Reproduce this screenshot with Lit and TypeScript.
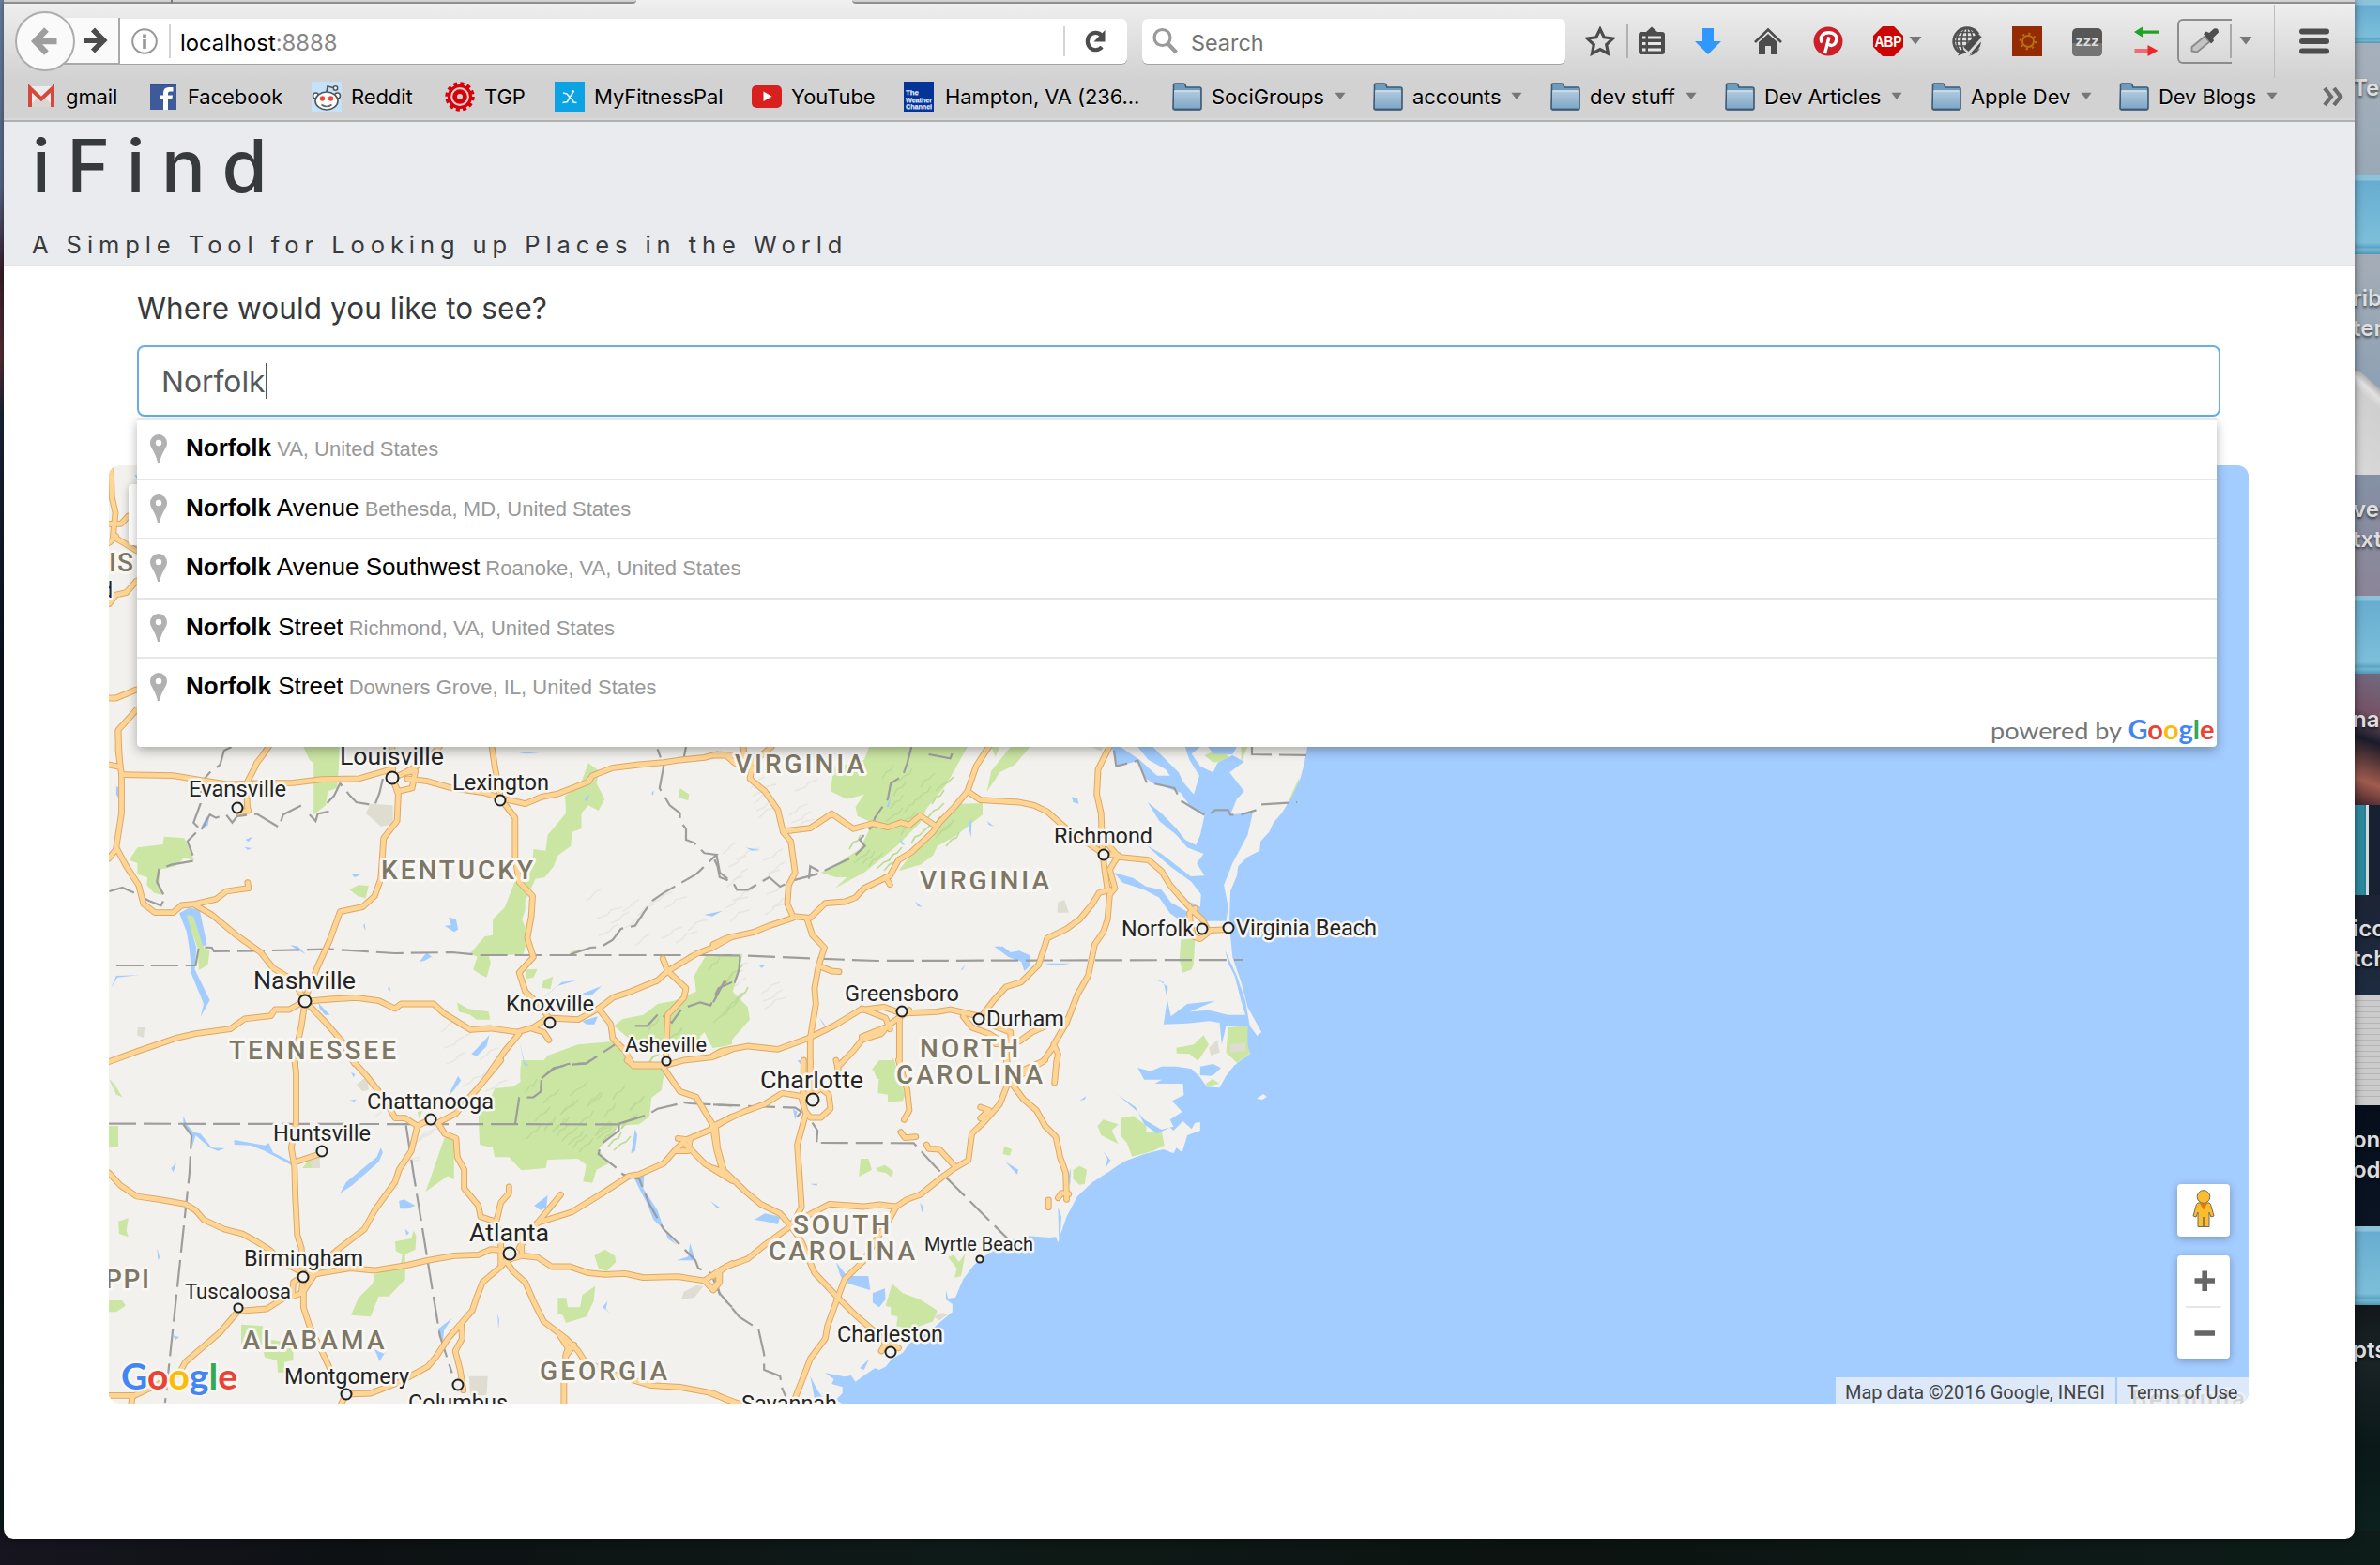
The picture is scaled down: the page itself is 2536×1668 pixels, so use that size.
import { LitElement, html, svg, css } from "lit";
import { customElement } from "lit/decorators.js";

const words = (s: string) => s.trim().split(/\s*;\s*/).filter(Boolean);

/* Every tile has its own survey grid; the matrix places it on the map. */
interface Tile { m: string; parks: string; water: string; grey: string; border: string; road: string; }

const tiles: Tile[] = [
  {
    m: "translate(0 290) scale(.54209 .33333)",
    parks: "", water: "264,648 270,650 270,662; 2600,600 4430,600 4430,1600 2600,1600", grey: "", border: "",
    road: `218,620 220,720 227,770 225,800 222,845 268,890; 215,865 228,845; 215,805 238,805 252,780; 215,1060 228,1032 248,1025 268,988;
      215,1362 228,1362 268,1335; 268,1400 232,1465 235,1560`,
  },
  {
    m: "translate(100 780) scale(.43367 .33333)",
    parks: `515,48 605,48 598,180 575,190 570,235 540,265 540,100 530,90;
      107,370 170,360 172,335 222,340 247,412 222,403 200,430 162,440 160,490 170,522 148,515 130,490 132,465 107,455 107,420 87,410;
      222,578 245,575 268,655 270,690 285,700 280,745 258,762 255,690;
      628,505 650,490 675,492 668,532 648,525;
      1215,100 1242,125 1235,165 1255,215 1240,252 1215,235 1198,260 1198,310 1175,320 1172,365 1140,395 1130,430 1108,465 1085,470 1060,540 1060,570 1052,600 1068,650 1055,712 970,715 975,740 965,785 948,775 932,760 942,720 925,708 960,655 980,650 980,600 1010,560 1040,460 1078,420 1080,375 1110,380 1115,330 1160,260 1158,205 1195,170;
      892,865 920,885 970,895 974,920 940,920 925,905 897,895;
      1440,180 1463,200 1460,220 1437,210; 1060,760 1090,758 1080,785 1062,790; 1105,795 1128,782 1122,822 1100,818;
      1505,712 1568,712 1568,1000 1520,1010 1500,960 1478,990 1440,985 1400,1000 1350,985 1318,985 1278,940 1300,918 1350,905 1385,870 1425,860 1480,830 1475,780;
      1048,1070 1098,1062 1115,1035 1190,1000 1275,990 1310,1010 1320,1065 1400,1075 1400,1110 1048,1110; 1190,695 1225,695 1180,708 1168,705`,
    water: `55,175 68,180 62,215 55,200; 210,580 235,562 260,570 278,680 268,685 245,590 228,585 252,690 248,760 285,858 262,912 270,870 240,775 235,695 228,640;
      372,345 390,335 380,352; 370,368 388,372 378,378; 632,452 655,458 640,465; 665,612 668,638 662,620;
      862,620 878,618 872,592 890,600 895,632 885,640; 800,735 818,705 832,722 852,735 828,720 812,732;
      482,682 500,685 520,710 498,695; 552,868 580,905 568,905 555,885; 928,1030 972,970 965,1005 940,1038; 1045,985 1058,1055 1070,1068 1058,1066;
      1200,925 1238,910 1230,935 1210,935; 1100,855 1150,800 1185,795 1140,812 1110,845; 1195,840 1248,812 1225,840; 42,820 55,780 110,778 58,785;
      1025,62 1062,70 1095,68; 1205,215 1218,200 1212,225; 1500,585 1545,572 1520,590; 275,275 285,265 280,300 262,310; 725,810 730,830 722,822; 1198,395 1208,400; 1370,195 1376,188 1374,205; 145,545 155,550 160,558; 38,330 48,335`,
    grey: "668,260 680,230 735,235 735,295 705,302; 108,945 125,945 122,978 106,970",
    border: `338,48 320,60 310,105 285,130 265,160 262,230 245,290 260,310 230,350 248,412 190,425 160,440 155,480 175,530 165,555 135,540 100,515 70,498 38,510;
      265,312 285,265 300,275 325,265 340,290 352,270 400,262 455,305 465,265 510,235 525,240; 530,265 545,285 550,262 575,255 575,225 590,205 605,165 630,205 645,225 690,235 702,195 710,150;
      55,747 250,747 258,688 290,690 295,702 400,700 580,695 740,708 880,705 950,714 1568,714; 1170,712 1220,690 1245,688 1275,665 1295,630 1330,620 1350,580 1372,540 1400,515 1480,455 1530,393 1500,388 1475,355 1455,345 1455,310 1440,285 1440,260 1415,235 1390,180 1400,110 1385,55; 1455,48 1450,80;
      1530,395 1538,450 1568,480; 1100,1108 1130,1075 1165,1065 1210,1060 1280,1000; 1330,940 1360,940 1390,898 1420,930 1445,885 1490,865 1515,875 1535,820 1568,800`,
    road: `60,0 60,60 68,135 68,260 55,370 80,430 110,490 122,550 150,578 195,578 215,555 250,550 300,535 325,510 380,500 378,482; 37,105 64,112;
      68,137 195,140 250,152 330,168 400,165 490,163 560,152 650,150 690,135 735,118; 430,46 415,75 400,100 395,115 375,165 377,240 380,252 355,258;
      37,405 55,375; 520,850 550,750 580,665 605,575 660,560 690,525 705,470 712,340 745,285 748,200 733,145; 733,48 735,140;
      850,46 820,90 765,130 733,150 748,190 782,180 790,125 765,130; 770,150 820,158 880,180 960,195 1010,215 1060,230 1100,208 1140,198 1215,160 1225,140 1275,115 1340,105 1400,98 1440,90 1500,82 1530,72 1568,75;
      978,48 985,110 1000,215 1035,275 1035,400 1045,480 1078,525 1075,590 1065,660 1080,720 1045,770 1060,830 1100,880 1115,910;
      250,555 290,585 350,650 410,705 440,755 490,795 519,860; 519,860 480,888 445,888 435,908 370,918 335,950 250,965 200,980 110,1020 37,1055;
      519,862 580,855 645,850 700,860 740,885 755,870 835,870 860,900 925,952 975,948 1040,960 1080,945 1115,915 1190,920 1240,885 1275,850 1320,830 1385,795 1410,765 1480,710 1520,690 1568,655;
      519,862 510,940 495,1030 495,1060; 525,870 570,930 610,990 640,1060; 1045,965 1010,1020 975,1085; 1080,950 1105,960 1118,985;
      1240,885 1270,935 1275,980 1305,1020 1325,1068 1400,1068 1450,1050 1520,1040 1568,1015; 1398,725 1410,765 1455,820 1450,850 1410,905 1405,1065`,
  },
  {
    m: "translate(100 1130) scale(.43367 .33333)",
    parks: `37,210 60,210 60,278 37,275; 60,515 85,505 80,545 85,565 62,555; 37,768 70,768 78,785 55,805 37,805; 37,60 50,75 70,118 55,110;
      865,235 885,250 885,382 870,370 815,420 825,385 845,310; 740,580 780,570 785,545 792,560 790,605 765,620 765,700 725,755 700,755 680,820 632,815 650,760 685,715 690,685 725,665 752,665 758,620 742,610;
      362,845 415,850 420,890 490,905 490,960 468,965 468,998 452,998 450,960 420,950 415,920 362,910;
      1230,625 1255,605 1280,625 1283,645 1260,675 1240,665; 1140,760 1160,760 1165,790 1195,790 1200,750 1232,722 1228,770 1210,820 1160,840 1152,815 1140,810;
      1030,85 1048,70 1050,0 1200,0 1240,30 1300,25 1380,15 1400,45 1395,95 1370,120 1365,180 1340,205 1290,210 1240,285 1265,330 1235,350 1225,392 1202,388 1210,335 1190,315 1115,318 1110,345 1050,352 1020,310 985,310 980,280 948,270 945,180 965,150 985,90;
      525,325 555,308 545,345 512,345; 795,165 808,155 800,190`,
    water: `220,178 228,205 245,230 262,235 290,280 322,282 305,290 285,280 250,240 242,275 240,232 220,210; 345,255 420,272 430,265 440,295 485,325 498,345 470,325 420,290 385,272 345,270;
      605,425 620,390 695,310 705,280 710,295 700,325 635,400; 870,115 895,50 902,65 885,95; 190,345 203,328 195,358; 750,450 762,445 790,465 770,475 752,475; 1082,465 1115,432 1112,470 1098,480;
      1325,370 1352,370 1350,410 1385,480 1400,540 1375,510 1360,460 1338,405; 1432,640 1460,628 1465,585 1478,640; 845,860 880,825 860,865 858,900; 690,925 715,940 718,930 702,963;
      155,600 162,630 158,640; 1320,298 1330,220 1335,240 1330,290; 1250,790 1262,770 1258,795 1270,810; 1515,450 1542,475 1530,472; 992,810 996,830 994,862; 1310,505 1322,520; 632,38 642,45 638,55; 628,128 645,125 640,132; 1058,0 1068,12; 195,880 210,885 200,895; 1430,335 1465,390; 765,540 775,552 768,560; 765,760 770,770; 1405,550 1432,590 1410,570`,
    grey: "532,318 555,305 556,345 535,345; 645,78 672,50 675,95 660,100; 922,1010 968,1010 965,1070 925,1075; 1450,740 1480,720 1498,722 1475,760 1443,765",
    border: `37,203 1290,205; 767,208 785,360 815,600 850,880 880,1000; 220,205 240,240 235,360 175,1095; 1290,203 1290,225 1245,270 1240,300 1285,345 1300,365 1340,380 1365,460 1400,540 1440,590 1478,640 1485,665 1525,685 1538,750 1568,790;
      1290,203 1360,175 1385,155 1435,140 1440,133 1465,138 1568,145; 1035,205 1045,120 1080,118 1098,100 1100,55 1130,28 1165,12 1210,10 1220,0`,
    road: `493,0 497,40 497,200 485,280 493,340 495,435 500,560 510,600 513,680; 497,325 560,298; 635,0 670,50 715,125 740,185 765,185 795,210 825,190;
      1000,0 940,95 915,130 890,170 845,200 862,235 890,250 893,310 910,350 910,410 945,465 950,500 985,515 1000,560 1000,655; 795,210 780,290 750,350 740,390 690,480 665,540 600,605 560,650 515,690;
      37,360 65,400 105,435 160,445 225,460 250,480 270,510 320,540 365,555 400,580 430,605 470,650 515,680; 513,692 560,680 630,665 690,672 770,655 820,640 885,625 945,622 975,605 1010,608;
      1020,405 1020,425 1000,455 990,510; 1147,430 1090,520 1045,600; 1090,520 1175,485 1250,425 1315,370 1340,365 1400,330 1430,285 1455,255 1510,225 1568,180;
      1310,0 1325,15 1395,15 1440,100 1480,118 1520,205 1530,285 1545,355; 1435,250 1465,255 1460,290 1430,290; 1455,270 1500,330 1568,385;
      1048,560 1052,625 1090,630 1125,660 1170,660 1215,680 1255,685 1305,682 1350,695 1435,692 1500,705 1540,670 1568,650; 1500,705 1520,732 1535,710 1535,680;
      1025,620 1000,660 955,710 940,760 930,800 900,845 870,890 840,950 820,980 750,1030 680,1065 620,1068 608,1098; 1012,640 1030,675 1060,710 1080,770 1105,835 1160,890 1190,930 1205,960 1265,1000 1370,1040 1440,1045 1510,1062 1568,1090; 1052,625 1012,640;
      1145,880 1165,920 1160,940 1155,1030 1155,1098; 1180,910 1160,945; 903,845 905,890 888,930 900,990 908,1055;
      513,690 490,710 488,745 455,770 425,795 355,802 310,870 225,965 210,1000 160,1035 100,1072 37,1072; 95,1075 92,1098; 540,690 515,740 515,790 530,850 560,930 585,1000 620,1068; 488,755 510,745 515,690`,
  },
  {
    m: "translate(760 780) scale(.45918 .33333)",
    parks: `362,48 590,48 540,170 495,245 480,290 430,360 395,400 350,450 282,500 310,465 285,465 250,450 300,410 340,375 370,290 335,270 330,240 350,200 310,215 272,190 280,115 350,90;
      570,230 625,228 625,265 560,335 520,365 510,395 480,425 430,445 460,390 510,335 530,285; 645,48 665,48 655,80; 690,48 735,48 700,105 665,130 635,192 645,125;
      0,712 68,710 55,790 45,830 80,880 85,920 30,1005 0,1010; 1085,665 1118,660 1115,740 1110,760 1090,770 1082,730; 1195,945 1240,940 1245,1030 1215,1058 1190,1025;
      1075,1010 1115,1000 1138,970 1150,1000 1125,1052 1105,1030 1075,1028; 370,1075 405,1070 418,1040 420,1110 380,1110; 1360,145 1355,205 1320,270 1345,190; 1140,75 1165,60 1195,75 1190,95 1160,98; 1225,48 1240,48 1225,95`,
    water: `3700,40 1380,40 1370,110 1362,150 1340,215 1318,262 1300,290 1290,320 1270,350 1268,380 1240,400 1218,430 1215,460 1200,510 1198,600 1200,650 1205,720 1225,800 1240,880 1272,960 1262,972 1240,930 1240,1000 1246,1030 1215,1060 1200,1112 3700,1112;
      925,48 935,110 985,94 1005,150 1020,165 1045,175 1085,195 1110,245 1140,268 1130,330 1120,362 1095,345 1075,310 1040,260 1008,225 1035,285 1075,330 1100,370 1138,390 1122,420 1140,460 1108,462 1040,390 1005,362 1060,430 1110,480 1132,520 1130,560 1100,540 1130,605 1190,605 1195,560 1185,490 1205,420 1240,330 1252,258 1200,265 1215,215 1232,190 1198,130 1232,95 1205,75 1170,100 1160,130 1130,110 1110,70 1130,48 1095,48 1105,90 1128,140 1115,200 1090,160 1080,130 1040,75 1020,48 985,48 1010,90 1050,120 1060,140 1030,140 990,90 945,48;
      1148,48 1160,70 1205,72 1215,48; 930,450 975,468 1005,495 1040,505 1062,545 1100,575 1092,612 1060,580 1035,530 1000,505 950,482; 1188,700 1195,740 1210,780 1225,860 1235,905 1195,905 1150,890 1105,895 1165,860 1100,870 1062,910 1045,800 1020,788 1040,800 1055,815 1052,870 1045,935 1100,932 1150,925 1175,930 1180,1000 1190,940 1245,940 1235,860 1215,780;
      652,686 672,686 690,705 710,700 735,715 735,748 722,765 715,735 685,720; 765,740 830,740 800,748; 832,208 845,212 848,230 835,225; 985,1075 1020,1090 1065,1112 1000,1112; 1130,1080 1160,1068 1175,1080 1155,1100 1130,1098;
      600,275 598,340 592,300; 635,285 652,302 640,298; 468,542 485,560 475,558; 562,548 576,552; 75,370 110,378 90,380; 245,912 262,942 255,935; 895,1010 900,1030; 105,745 122,745 112,755; 402,240 412,208 408,240; 432,340 445,362 438,360; 575,760 585,745 578,762; 330,1020 342,1045; 898,188 905,192; 205,1110 212,1065 220,1110`,
    grey: "800,545 815,537 825,578 798,578; 1150,1010 1170,985 1175,1025 1155,1035; 1200,1000 1235,995 1235,1020 1200,1025; 878,48 905,48 900,62",
    border: `0,714 80,716 240,725 380,732 1230,729; 460,48 450,100 440,140 412,165 405,215 375,275 370,300 340,345 352,365 325,400 240,455 185,475 155,495 130,465 80,505 55,505 45,480 15,465 10,430 0,400; 222,470 225,430 245,445;
      500,72 550,85 560,48; 930,60 935,110 985,92 1005,160 1070,180 1085,220 1145,270 1165,250 1195,250 1200,265 1225,265 1260,250; 1272,232 1355,225; 1250,48 1250,72 1382,75; 62,718 60,760 50,800 25,800 0,865`,
    road: `0,75 30,75 50,100 90,115 85,150 120,190 150,250 162,320 180,350 190,450 175,490 172,550 185,590 225,595 260,548 305,543 330,530 350,500 410,460 430,410 460,385 510,320 525,290 560,240 590,190 610,110 640,46;
      70,46 72,85; 135,48 90,100; 162,318 225,308 275,262 325,310 370,293 405,305 435,290 455,298 480,268 515,300; 400,465 410,488; 590,190 620,218 710,225 745,235 775,255 820,310 895,380;
      920,46 893,120 890,200 900,260 903,380 908,440 915,505; 905,340 940,400 1010,410 1040,445 1060,490 1085,530 1115,575 1135,600 1150,640 1130,662 1115,655 1108,620 1105,580 1118,565; 1150,635 1195,632;
      905,390 940,395 920,440 932,500 920,520 915,600 905,640 885,680 870,780 845,840 820,930 790,1000 800,1030 797,1060; 790,1005 765,1055 710,1100;
      920,505 895,515 880,550 850,600 820,630 775,660 755,745 715,800 680,815 650,860 625,905; 0,680 30,660 95,640 130,620 185,595; 218,600 230,650 258,690 245,745 235,820 238,870 225,980 225,1060; 248,750 275,765 292,767;
      0,1035 20,1020 80,1005 150,1015 220,980 280,940 340,890 395,880 437,900 520,895 550,888 620,910; 345,885 400,915 410,950; 432,905 432,1060; 455,890 405,940 390,965 345,985 325,1020 290,1070 285,1110; 345,975 400,945;
      580,910 600,945 640,965 680,1000 710,990 740,960 790,930 820,920; 640,935 690,960 690,1000 655,998; 680,1000 682,1060`,
  },
  {
    m: "translate(760 1130) scale(.45918 .33333)",
    parks: `368,30 385,0 420,0 445,110 440,130 405,135 405,110 382,105 385,45; 892,210 905,190 940,205 925,225 940,268 900,240; 945,185 975,178 1005,210 1005,230 1040,225 1047,272 1020,290 972,308 960,265 945,240;
      835,350 850,338 867,350 862,395 850,398 835,380; 342,315 360,315 368,350 338,372; 378,345 398,335 418,355 415,375 400,360 380,355; 675,275 693,285 688,305 672,300;
      415,715 440,745 480,765 520,800 510,835 460,860 425,850 428,820 412,815 412,790 400,785; 545,630 558,622 570,645 585,618 575,690 560,695 565,665`,
    water: `3700,0 1235,0 1210,15 1190,50 1175,88 1145,85 1130,55 1110,28 1075,20 1040,20 1015,35 985,25 1000,45 1050,55 1025,75 1090,75 1092,112 1065,130 1088,165 1060,190 1068,212 1040,222 1000,190 985,165 940,112 920,92 980,150 1000,205 1030,235 1060,215 1068,225 1090,195 1110,220 1118,200 1130,198 1130,225 1100,240 1088,295 1075,280 1068,298 1045,285 1000,300 960,320 940,335 920,355 880,390 845,435 820,500 805,560 800,583 795,565 780,567 730,562 690,575 655,590 640,615 605,655 580,700 562,758 545,762 540,735 540,765 555,780 555,805 520,845 500,870 455,905 440,935 415,955 400,980 385,990 375,985 350,1008 330,1028 320,1008 305,1012 260,1000 280,1020 275,1035 300,1045 300,1065 285,1085 300,1100 3700,1100;
      285,645 310,690 360,690 364,735 315,715 295,690; 370,745 398,730 400,765 385,790 370,775; 95,510 120,490 155,500 150,525 120,515; 800,470 808,500 805,560 802,570; 830,345 828,400 822,380; 905,290 922,320 910,345 915,315;
      225,1010 240,1050 262,1098 235,1080; 340,985 362,955 350,990; 850,130 865,115 862,125; 678,325 708,350 705,365; 195,0 215,0 215,35; 185,155 195,165 190,190; 0,450 18,475; 350,430 355,450; 480,455 488,470 484,488; 225,395 242,395 240,402; 135,450 165,475; 300,290 322,342; 686,430 700,445; 1130,20 1160,12 1178,25 1160,48 1130,48`,
    grey: "510,820 530,808 545,812 525,832",
    border: `0,142 190,152 205,165 190,188; 230,200 242,225 240,262; 250,264 465,265 515,340 690,580; 0,700 15,745 45,795 60,820 105,860 118,940 118,990 155,1010 160,1050 168,1075`,
    road: `225,0 225,100 205,120 215,170 195,270 200,370 205,470 185,520; 210,0 208,130; 228,125 205,115 160,105 120,140 70,165 0,210; 215,165 225,183 250,183 272,155 268,110 250,90 228,110;
      5,210 10,280 25,355; 0,345 30,360 75,420 110,460 155,490 180,530 205,580 235,680 290,760 330,815 385,880 400,905 430,920; 390,930 400,905;
      180,530 120,590 80,635 30,660 0,690; 15,680 15,710 0,735; 180,525 270,460 350,468 385,462 425,468 450,445 480,430 530,375 560,345 592,320 600,235 630,195 665,140 685,70 690,50 770,0;
      425,468 400,530 380,570 350,640 305,700 290,755 265,850 260,890 225,955 210,1010 190,1080; 495,270 500,283 525,285 560,338; 435,230 445,248 470,245; 430,0 450,95 455,160 443,190;
      680,0 690,70 720,125 750,160 770,210 795,245 805,310 818,360 820,445; 800,440 808,425 825,428; 778,447 778,470; 797,0 792,72; 620,150 640,160 620,185 632,190; 0,1065 30,1085 60,1098; 285,0 290,30`,
  },
];

type Label = [string, number, number, number, number, string];
/* text, left, baseline, width, size, kind */
const labels: Label[] = [
  ["KENTUCKY", 406, 937, 162, 28, "state"], ["TENNESSEE", 244, 1128.5, 178, 28, "state"], ["ALABAMA", 258.500, 1437.5, 151, 28, "state"],
  ["GEORGIA", 575, 1470.5, 136, 28, "state"], ["PPI", 112, 1373, 47, 28, "state"], ["VIRGINIA", 783, 824, 138, 28, "state"],
  ["VIRGINIA", 980, 948, 138, 28, "state"], ["NORTH", 980, 1127, 105, 28, "state"], ["CAROLINA", 955, 1154.5, 156, 28, "state"],
  ["SOUTH", 845, 1314.5, 103, 28, "state"], ["CAROLINA", 819, 1342.5, 156, 28, "state"], ["IS", 116, 609, 26, 28, "state"], ["d", 108, 637, 12, 24, "city"],
  ["Louisville", 362, 815, 111, 26, "city"], ["Evansville", 201, 849, 104, 23.5, "city"], ["Lexington", 482, 841.5, 103, 23.5, "city"],
  ["Nashville", 270, 1054, 109, 26, "city"], ["Knoxville", 539, 1077.5, 94, 23.5, "city"], ["Asheville", 666, 1121, 87, 21.5, "city"],
  ["Chattanooga", 391, 1181.5, 135, 23.5, "city"], ["Huntsville", 291, 1215.5, 104, 23.5, "city"], ["Atlanta", 500, 1322.5, 85, 26, "city"],
  ["Birmingham", 260, 1349, 127, 23.5, "city"], ["Tuscaloosa", 197, 1384, 113, 22, "city"], ["Montgomery", 303, 1474.5, 133, 23.5, "city"],
  ["Columbus", 435, 1503, 106, 23.5, "city"], ["Richmond", 1123, 899, 105, 23.5, "city"], ["Norfolk", 1195, 998, 77, 23.5, "city"],
  ["Virginia Beach", 1317, 997, 150, 23.5, "city"], ["Greensboro", 900, 1066.5, 122, 23.5, "city"], ["Durham", 1051, 1094, 83, 23.5, "city"],
  ["Charlotte", 810, 1159.5, 110, 26, "city"], ["Myrtle Beach", 985, 1333, 116, 20.5, "city"], ["Charleston", 892, 1429.5, 113, 23.5, "city"],
  ["Savannah", 790, 1503.5, 102, 23.5, "city"], ["Bermuda", 2271, 1500, 121, 26, "faint"],
];
const markers: [number, number, number][] = [
  [418, 829, 6.5], [253, 861, 5.5], [533, 853, 5.5], [325, 1067, 6.5], [586, 1090, 5.5], [710, 1131, 4.6], [459, 1193, 5.5], [343, 1227, 5.5],
  [543, 1336, 6.5], [323, 1361, 5.5], [254, 1394, 4.6], [369, 1486, 5.5], [488, 1476, 5.5], [1176, 911, 5.5], [1281, 990, 5.5], [1309, 989, 5.5],
  [961, 1078, 5.5], [1043, 1086, 5.5], [866, 1172, 6.5], [1044, 1342, 3.6], [949, 1441, 5.5],
];

const googleSpans = svg`<tspan fill="#4285f4">G</tspan><tspan fill="#ea4335">o</tspan><tspan fill="#fbbc05">o</tspan><tspan fill="#4285f4">g</tspan><tspan fill="#34a853">l</tspan><tspan fill="#ea4335">e</tspan>`;

@customElement("place-map")
export class PlaceMap extends LitElement {
  static styles = css`
    :host { display: block; position: relative; width: 2280px; height: 1000px; border-radius: 12px; overflow: hidden; background: #f2f1ed; }
    .canvas { display: block; width: 2280px; height: 1000px; font-family: Roboto, sans-serif; }
    .canvas path { vector-effect: non-scaling-stroke; }
    .park { fill: #cbe6a3; }
    .water { fill: #a3ccff; }
    .grey { fill: #dfddd2; }
    .border { fill: none; stroke: #9d9d9d; stroke-width: 2.200; stroke-dasharray: 29 8; }
    .case { fill: none; stroke: #dda865; stroke-width: 6.8; stroke-linejoin: round; stroke-linecap: round; }
    .road { fill: none; stroke: #ffd596; stroke-width: 4.8; stroke-linejoin: round; stroke-linecap: round; }
    .ridge { fill: none; stroke: #bcdb96; stroke-width: 1.6; }
    .scarp { fill: none; stroke: #e7e6e2; stroke-width: 1.6; }
    .city { fill: #242424; stroke: #f7f6f3; stroke-width: 5; paint-order: stroke; stroke-linejoin: round; }
    .state { fill: #7e7766; font-weight: 500; stroke: #f8f7f4; stroke-width: 6; paint-order: stroke; stroke-linejoin: round; }
    .faint { fill: #84878c; font-weight: 500; stroke: #d6e6fb; stroke-width: 5; paint-order: stroke; }
    .dot { fill: #f0f0ee; stroke: #222; stroke-width: 2; }
    .logo { font-family: Lato, sans-serif; stroke: #f8f7f4; stroke-width: 5; paint-order: stroke; stroke-linejoin: round; font-weight: 700; }
    .kinds { position: absolute; left: 21px; top: 20px; width: 150px; height: 65px; background: #fff; border-radius: 4px; box-shadow: 0 2px 8px rgba(0,0,0,.25); }
    .controls { position: absolute; right: 20px; top: 766px; display: flex; flex-direction: column; gap: 20px; }
    .ctl { width: 56px; background: #fff; border-radius: 4px; box-shadow: 0 2px 8px rgba(0,0,0,.28); display: flex; flex-direction: column; align-items: center; }
    .peg { height: 56px; justify-content: center; }
    .zoom { height: 110px; }
    .zoom svg { display: block; }
    .peg svg { margin-top: -4px; }
    .credit { position: absolute; right: 0; bottom: 0; height: 28px; display: flex; gap: 2px; font: 20px/31px Roboto, sans-serif; color: #444; white-space: nowrap; }
    .credit span { box-sizing: border-box; height: 28px; line-height: 32px; background: rgba(245,245,245,.7); padding-left: 10px; }
    .data { width: 298px; }
    .terms { width: 140px; }
  `;
  private layer(key: "parks" | "water" | "grey" | "border" | "road", cls: string, close: boolean) {
    return tiles.map((t) => svg`<g transform=${t.m}>${words(t[key]).map((p) => svg`<path class=${cls} d=${"M" + p.replace(/\s+/g, "L") + (close ? "Z" : "")}></path>`)}</g>`);
  }
  private ridges() {
    const areas: [number, number, number, number, number][] = [
      [560, 1165, 120, 50, 20], [580, 1205, 80, 25, 10], [690, 1100, 55, 35, 8], [755, 1035, 30, 60, 8], [940, 830, 70, 60, 14], [905, 905, 45, 25, 7], [960, 890, 50, 20, 5],
    ];
    return areas.map(([x, y, w, h, n]) => Array.from({ length: n }, (_, i) => {
      const px = x + ((i * 37) % w), py = y + ((i * 23) % h);
      return svg`<path class="ridge" d=${`M${px} ${py}l${4 + (i % 3) * 2} -7l5 -2l${3 + (i % 4)} -6`}></path>`;
    }));
  }
  private scarps() {
    const areas: [number, number, number, number, number][] = [[625, 960, 110, 50, 13], [770, 910, 80, 80, 15], [470, 1100, 60, 70, 8], [800, 840, 80, 50, 9], [770, 1030, 80, 50, 7], [400, 1190, 60, 90, 8]];
    return areas.map(([x, y, w, h, n]) => Array.from({ length: n }, (_, i) => {
      const px = x + ((i * 41) % w), py = y + ((i * 29) % h);
      return svg`<path class="scarp" d=${`M${px} ${py}l${5 + (i % 4) * 2} -4l4 -5l${6 + (i % 3) * 3} -3`}></path>`;
    }));
  }
  render() {
    return html`
      <svg class="canvas" viewBox="116 496 2280 1000">
        ${this.scarps()} ${this.layer("parks", "park", true)} ${this.ridges()} ${this.layer("grey", "grey", true)} ${this.layer("water", "water", true)}
        <path fill="#f2f1ed" d="M1339 1171l7 -5l4 3l-5 3z"></path>
        <path class="park" d="M1285 1155l7 -5l7 5l-13 3z"></path>
        ${this.layer("border", "border", false)} ${this.layer("road", "case", false)} ${this.layer("road", "road", false)}
        ${labels.map(([t, x, y, w, s, k]) => svg`<text class=${k} x=${x} y=${y} font-size=${s} textLength=${w} lengthAdjust=${k === "city" ? "spacingAndGlyphs" : "spacing"}>${t}</text>`)}
        ${markers.map(([x, y, r]) => svg`<circle class="dot" cx=${x} cy=${y} r=${r}></circle>`)}
        <text class="logo" x="129" y="1480.5" font-size="38.5" textLength="124" lengthAdjust="spacingAndGlyphs">${googleSpans}</text>
      </svg>
      <div class="kinds"></div>
      <div class="controls">
        <div class="ctl peg">
          <svg width="24" height="40" viewBox="0 0 24 40"><g fill="#fbbc2d" stroke="#6f6a5a" stroke-width="1"><path d="M6 14h12l1.500 1.500L23 28l-3 1-2-5v15.500H6V24l-2 5-3-1 3.500-12.500z"></path><circle cx="12" cy="7.500" r="6.800"></circle></g><path d="M8 14.500h8l-4 7z" fill="#e6780f"></path><path d="M12 29v10.500" stroke="#6f6a5a" stroke-width="1.500"></path></svg>
        </div>
        <div class="ctl zoom">
          <svg width="56" height="110"><path d="M18.500 27h21.500M29.200 16.500v21.500M18.500 83h21.500" stroke="#666" stroke-width="5.600"></path><path d="M9 55h37.500" stroke="#e6e6e6" stroke-width="2"></path></svg>
        </div>
      </div>
      <div class="credit"><span class="data">Map data ©2016 Google, INEGI</span><span class="terms">Terms of Use</span></div>`;
  }
}

const folder = svg`<path d="M1.500 7V3.500q0-1.500 1.500-1.500h9q1.500 0 2 1.500l.8 2.500H29q2 0 2 2V28q0 2-2 2H3q-2 0-2-2z" fill="#6f9cbd" stroke="#3d5a74" stroke-width="1.600"></path><path d="M2 9.500h28V28H2z" fill="url(#fold)"></path><path d="M2.500 10h27" stroke="#d3e2ee" stroke-width="1.500"></path><path d="M2 29.500h28" stroke="#3d5a74" stroke-width="1.500"></path><defs><linearGradient id="fold" x1="0" y1="0" x2="0" y2="1"><stop offset="0" stop-color="#b3cadd"></stop><stop offset="1" stop-color="#7fa9c8"></stop></linearGradient></defs>`;
const marks: Record<string, unknown> = {
  folder,
  gmail: svg`<rect x="0" y="5" width="28" height="22" fill="#eeecea"></rect><path d="M0 27l11-11 3 3 3-3 11 11z" fill="#d9d6d3"></path><path d="M2 27V7l12 11.500L26 7v20" fill="none" stroke="#d5493d" stroke-width="4"></path>`,
  facebook: svg`<rect x="0" y="2" width="28" height="28" fill="#3f5a9a"></rect><path d="M0 2h28v1.500H0z" fill="#2c4380"></path><path d="M14 30V19h-4v-4.500h4V12q0-6 6-6h4.500v4.500H21q-2 0-2 2v2h5l-.8 4.500H19v11z" fill="#fff"></path>`,
  reddit: svg`<rect width="32" height="32" fill="#c5e2fb"></rect><g stroke="#555" stroke-width="1.600" fill="#fff"><path d="M16 11l1-6 6 1.500" fill="none"></path><circle cx="25.500" cy="7" r="2.200"></circle><circle cx="4.500" cy="15" r="3"></circle><circle cx="27.500" cy="15" r="3"></circle><ellipse cx="16" cy="20.500" rx="12" ry="9.500"></ellipse></g><circle cx="11.500" cy="18" r="2.700" fill="#f8433a"></circle><circle cx="20.500" cy="18" r="2.700" fill="#f8433a"></circle><path d="M10.500 24.500q5.500 4 11 0" fill="none" stroke="#666" stroke-width="1.600"></path>`,
  tgp: svg`<circle cx="16" cy="16" r="13.500" fill="none" stroke="#d90007" stroke-width="4.500" stroke-dasharray="3.900 3.170"></circle><circle cx="16" cy="16" r="11.500" fill="none" stroke="#d90007" stroke-width="3.200"></circle><circle cx="16" cy="16" r="5.400" fill="none" stroke="#d90007" stroke-width="4.800"></circle>`,
  mfp: svg`<rect width="32" height="32" fill="#0ba3e4"></rect><path d="M9 12l4 1 3 3.500 3.500-4.500M16.500 16l-3 5.500-5 1M16 17.500l3 1.500 1 3 3.500.5" fill="none" stroke="#e4f6ff" stroke-width="1.600"></path><circle cx="19.500" cy="10.500" r="1.400" fill="#fff"></circle>`,
  youtube: svg`<rect x="0" y="4" width="32" height="24" rx="5" fill="#d8201f"></rect><path d="M12.500 10.500v10.500l9-5.200z" fill="#fff"></path>`,
  weather: svg`<rect width="32" height="32" fill="#053498"></rect><g fill="#dfe7f7" font-family="Liberation Sans, sans-serif" font-size="8" font-weight="700"><text x="2" y="14">The</text><text x="2" y="21.500" textLength="28" lengthAdjust="spacingAndGlyphs">Weather</text><text x="2" y="29" textLength="28" lengthAdjust="spacingAndGlyphs">Channel</text></g>`,
};
const bookmarks: [string, string][] = [
  ["gmail", "gmail"], ["facebook", "Facebook"], ["reddit", "Reddit"], ["tgp", "TGP"], ["mfp", "MyFitnessPal"], ["youtube", "YouTube"], ["weather", "Hampton, VA (236..."],
  ["folder", "SociGroups"], ["folder", "accounts"], ["folder", "dev stuff"], ["folder", "Dev Articles"], ["folder", "Apple Dev"], ["folder", "Dev Blogs"],
];
const narrow = new Set(["gmail", "facebook"]);

const ico = (body: unknown, w = 32) => html`<svg class="ico" width=${w} height="32" viewBox="0 0 ${w} 32">${body}</svg>`;
const caret = html`<svg class="ico caret" width="14" height="32" viewBox="0 0 14 32"><path d="M.5 11h13L7 19.500z" fill="#777"></path></svg>`;

@customElement("browser-chrome")
export class BrowserChrome extends LitElement {
  static styles = css`
    :host { display: block; height: 130px; box-sizing: border-box; border-bottom: 2px solid #aeb1b2; font-family: Inter, sans-serif; color: #000;
      background: linear-gradient(#f0f0f0 0, #ebebeb 12px, #d2d2d2 84px, #d2d2d2 125px, #dcdcdc 128px); }
    .tabs { display: flex; height: 4px; }
    .tab { box-sizing: border-box; background: #d1d1d1; border-bottom: 2px solid #8e8e8e; }
    .first { width: 180px; border-right: 2px solid #777; }
    .second { width: 494px; border-bottom-right-radius: 6px; }
    .gap { width: 230px; }
    .rest { flex: 1; border-bottom-left-radius: 6px; }
    .nav { display: flex; align-items: center; height: 80px; }
    .ico { display: block; flex: none; }
    .back { box-sizing: border-box; width: 64px; height: 64px; margin-left: 12px; border: 2px solid #adadad; border-radius: 50%; background: #fafafa; display: flex; align-items: center; justify-content: center; position: relative; z-index: 1; }
    .fwd { box-sizing: border-box; width: 60px; height: 50px; margin-left: -12px; background: #fafafa; border-right: 2px solid #a9a9a9; border-bottom: 2px solid #a9a9a9; display: flex; align-items: center; padding-left: 21px; }
    .field { display: flex; align-items: center; height: 48px; background: #fff; box-shadow: 0 1px 0 #a4a4a4; font-size: 23px; white-space: nowrap; }
    .url { width: 1073px; border-radius: 0 6px 6px 0; }
    .url .ico:first-child { margin-left: 11px; }
    .rule { width: 2px; height: 36px; background: #d4d4d4; margin: 0 10px 0 11px; }
    .port { color: #868686; }
    .host { flex: 1; padding-top: 2px; font-size: 23.800px; }
    .url .rule.end { height: 32px; margin: 0 9px 0 0; }
    .reload { margin-right: 22px; }
    .search { width: 451px; margin-left: 16px; border-radius: 6px; color: #737373; }
    .search .ico { margin: 0 13px 0 11px; }
    .search span { padding-top: 2px; font-size: 23.400px; }
    .tools { display: grid; align-items: center; margin-left: 21px; grid-template-columns: 44px 11px 60px 64px 64px 64px 38px 46px 64px 64px 64px 48px 66px 37px 27px 34px; height: 80px; }
    .line { width: 2px; height: 36px; background: #b1b1b1; }
    .tall { width: 1px; height: 78px; background: #bdbdbd; }
    .pick { box-sizing: border-box; width: 58px; height: 48px; display: flex; align-items: center; border: 2px solid #8d8d8d; border-right: 0; border-radius: 6px 0 0 6px; padding-left: 11px; }
    .pick .line { margin-left: 11px; background: #a8a8a8; }
    .marks { display: grid; align-items: center; height: 38px; padding-left: 26px; font-size: 22px; letter-spacing: -.1px; white-space: nowrap;
      grid-template-columns: 130px 172px 142px 117px 210px 162px 286px 214px 189px 186px 220px 200px 217px 30px; }
    .mark { display: flex; align-items: center; text-shadow: 0 1px 0 rgba(255,255,255,.5); }
    .mark span { margin-left: 10px; }
    .mark.small span { margin-left: 12px; }
    .mark .caret { margin-left: 11px; width: 12px; }
    .mark.wide span { margin-left: 12px; }
  `;
  render() {
    return html`
      <div class="tabs"><div class="tab first"></div><div class="tab second"></div><div class="gap"></div><div class="tab rest"></div></div>
      <div class="nav">
        <div class="back">${ico(svg`<path d="M28.500 16H8M17.500 3.500L5.500 16l12 12.500" fill="none" stroke="#9e9e9e" stroke-width="6.500"></path>`)}</div>
        <div class="fwd">${ico(svg`<path d="M0 16H18M10 4.500L21.500 16 10 27.500" fill="none" stroke="#4c4c4c" stroke-width="5.800"></path>`, 26)}</div>
        <div class="field url">
          ${ico(svg`<circle cx="15" cy="16" r="12.800" fill="none" stroke="#989898" stroke-width="2"></circle><path d="M15 14v10M15 8.500v3.500" stroke="#989898" stroke-width="3.600"></path>`, 30)}
          <div class="rule"></div><div class="host">localhost<span class="port">:8888</span></div>
          <div class="rule end"></div>
          <div class="reload">${ico(svg`<path d="M18.500 9.500A8.600 9.200 0 1 0 19 22" fill="none" stroke="#4c4c4c" stroke-width="4.200"></path><path d="M22.500 4v12.500H10.500z" fill="#4c4c4c"></path>`, 24)}</div>
        </div>
        <div class="field search">${ico(svg`<circle cx="10.500" cy="12" r="8.500" fill="none" stroke="#9a9a9a" stroke-width="3.200"></circle><path d="M16.500 18.500l9 9.500" stroke="#9a9a9a" stroke-width="4.200"></path>`, 28)}<span>Search</span></div>
        <div class="tools">
          ${ico(svg`<path d="M16 3l4.200 8.800 9.500 1.200-7 6.600 1.800 9.500L16 24.500l-8.500 4.600 1.800-9.500-7-6.600 9.500-1.200z" fill="none" stroke="#4c4c4c" stroke-width="3.200"></path>`)}
          <div class="line"></div>
          ${ico(svg`<path d="M5 6h5l6-5.500L22 6h5q3 0 3 3v18q0 3-3 3H5q-3 0-3-3V9q0-3 3-3z" fill="#4c4c4c"></path><path d="M12 12h14M12 18.500h14M12 25h14M6 12h3.500M6 18.500h3.500M6 25h3.500" stroke="#e6e6e6" stroke-width="3"></path>`)}
          ${ico(svg`<path d="M10 2h12v14h8L16 30 2 16h8z" fill="#2f98ff"></path>`)}
          ${ico(svg`<path d="M2 17L16 3.500 30 17" fill="none" stroke="#4c4c4c" stroke-width="2.600"></path><path d="M6 17L16 8l10 9v13h-7v-9h-6v9H6z" fill="#4c4c4c"></path>`)}
          ${ico(svg`<circle cx="16" cy="16" r="15.500" fill="#cb2028"></circle><path d="M9.500 17.500C6 10.500 11 6.800 17 6.800c5.500 0 8.500 3.200 7.800 7.500-.8 5.500-5.300 7.800-8.300 4.700M17 11.500L12.500 29" fill="none" stroke="#fff" stroke-width="3.400"></path>`)}
          ${ico(svg`<path d="M10 0h12l10 10v12L22 32H10L0 22V10z" fill="#cc0404"></path><text x="1.500" y="21.500" textLength="29" lengthAdjust="spacingAndGlyphs" fill="#fff" font-family="Liberation Sans, sans-serif" font-weight="700" font-size="16">ABP</text>`)}
          ${caret}
          ${ico(svg`<g fill="none" stroke="#505050" stroke-width="1.700"><circle cx="16" cy="16" r="14.300" stroke-width="2.800"></circle><ellipse cx="16" cy="16" rx="6" ry="14"></ellipse><ellipse cx="16" cy="16" rx="11" ry="14"></ellipse><path d="M2 16h28M16 2v28M3.500 11h25M5 6.500h22M4 21h24M6 26h20"></path></g><path d="M5 33L32 4v18L16 33z" fill="#dcdcdc"></path><path d="M12.500 22.500L27 7l4.500 4.500L17.500 27z" fill="#4c4c4c"></path><path d="M6 31.500l5-7.500 4.500 4z" fill="#4c4c4c"></path><path d="M19 29.500L31 16.500Q30.500 26 19 30z" fill="#4c4c4c"></path>`)}
          ${ico(svg`<rect width="32" height="32" fill="#932c05"></rect><circle cx="17" cy="16" r="6" fill="none" stroke="#b8710f" stroke-width="2"></circle><circle cx="17" cy="16" r="8.200" fill="none" stroke="#b8710f" stroke-width="2.200" stroke-dasharray="2.200 4.240"></circle>`)}
          ${ico(svg`<rect y="2" width="32" height="30" rx="5" fill="#575757"></rect><path d="M0 18h32v9q0 5-5 5H5q-5 0-5-5z" fill="#747474"></path><text x="3.500" y="20.500" textLength="25" lengthAdjust="spacingAndGlyphs" fill="#dcdcdc" font-family="Liberation Sans, sans-serif" font-weight="700" font-size="14">zzz</text>`)}
          ${ico(svg`<path d="M2 6l9-5.500v4h17v3.200H11v4z" fill="#20a324"></path><path d="M2.500 24h15v4h-15z" fill="#f06a70"></path><path d="M27.500 26l-11-6v12z" fill="#f3232c"></path>`)}
          <div class="pick">${ico(svg`<path d="M2.500 26.500v-4.500L16 11l5.500 5.500L8 27.500z" fill="#c4c4c4" stroke="#8a8a8a" stroke-width="1.800"></path><path d="M15 8l3-2.500 3 1.500 5-4.500q5-1.500 5 4l-6 6 1 3-3 3z" fill="#4e4e4e"></path>`)}<div class="line"></div></div>
          ${caret}
          <div class="tall"></div>
          ${ico(svg`<path d="M3 5.500h26M3 16h26M3 26.500h26" stroke="#4c4c4c" stroke-width="6" stroke-linecap="round"></path>`)}
        </div>
      </div>
      <div class="marks">
        ${bookmarks.map(([kind, name]) => html`<div class="mark ${narrow.has(kind) ? "small" : kind === "weather" ? "wide" : ""}">${ico(marks[kind], narrow.has(kind) ? 28 : 32)}<span>${name}</span>${kind === "folder" ? caret : ""}</div>`)}
        ${ico(svg`<path d="M2 7l7 9-7 9M12 7l7 9-7 9" fill="none" stroke="#6c6c6c" stroke-width="4.200"></path>`, 26)}
      </div>`;
  }
}

const results: [string, string][] = [
  ["", "VA, United States"], ["Avenue", "Bethesda, MD, United States"], ["Avenue Southwest", "Roanoke, VA, United States"],
  ["Street", "Richmond, VA, United States"], ["Street", "Downers Grove, IL, United States"],
];

@customElement("place-search")
export class PlaceSearch extends LitElement {
  static styles = css`
    :host { display: block; position: relative; font-family: Inter, sans-serif; }
    .label { font-size: 31.500px; line-height: 40px; color: #373a3c; padding-top: 25px; letter-spacing: .08px; }
    .input { box-sizing: border-box; width: 2220px; height: 76px; margin-top: 19px; border: 2px solid #66afe9; border-radius: 8px; display: flex; align-items: center; padding-left: 24px; font-size: 31.800px; color: #55595c; }
    .bar { width: 2px; height: 38px; background: #55595c; }
    .menu { position: absolute; left: 0; top: 162px; width: 2216px; height: 350px; box-sizing: border-box; background: #fff; border-radius: 4px; box-shadow: 0 4px 12px rgba(0,0,0,.3); font-family: "Liberation Sans", sans-serif; z-index: 2; }
    .row { box-sizing: border-box; height: 63.500px; border-top: 2px solid #e6e6e6; display: flex; align-items: center; padding: 0 0 1px 14px; white-space: pre; }
    .row svg { display: block; margin-right: 20px; }
    .text { font-size: 26px; line-height: 60px; color: #000; }
    .more { font-size: 22px; color: #999; }
    .powered { display: block; margin-left: auto; width: 244px; height: 30px; padding-top: 2px; font-family: Lato, sans-serif; overflow: visible; }
  `;
  render() {
    return html`
      <div class="label">Where would you like to see?</div>
      <div class="input"><span>Norfolk</span><div class="bar"></div></div>
      <div class="menu">
        ${results.map(([rest, more]) => html`<div class="row"><svg width="18" height="32" viewBox="0 0 18 32"><path d="M9 1a9 9 0 0 1 9 9c0 6-5.500 9-8 21H8C5.500 19 0 16 0 10a9 9 0 0 1 9-9z" fill="#b1b1b1"></path><circle cx="9" cy="10" r="3.200" fill="#fff"></circle></svg><span class="text"><b>Norfolk</b>${rest ? " " + rest : ""}<span class="more"> ${more}</span></span></div>`)}
        <svg class="powered" viewBox="0 0 244 30"><text x="3" y="22" font-size="25" fill="#757575" textLength="140" lengthAdjust="spacingAndGlyphs">powered by</text><text x="149.500" y="22" font-size="29" font-weight="700" textLength="92" lengthAdjust="spacingAndGlyphs">${googleSpans}</text></svg>
      </div>`;
  }
}

/* kind, height, caption lines */
const desk: [string, number, string][] = [
  ["folder", 46, ""], ["sky", 141, "Test"], ["folder", 84, ""], ["sky2", 124, "ribu|ter"], ["paper", 111, ""], ["dusk", 129, "ver|txt"], ["folder", 83, ""],
  ["ember", 140, "nas"], ["app", 96, ""], ["navy", 107, "ico|tch"], ["paper lines", 117, ""], ["night", 129, "on|odf"], ["folder", 84, ""], ["forest", 277, "pts"],
];

@customElement("app-root")
export class AppRoot extends LitElement {
  static styles = css`
    :host { display: block; position: relative; width: 2536px; height: 1668px; overflow: hidden;
      background: linear-gradient(#6f87a3 0, #5a6a8a 200px, #3a1f2c 290px, #5b3038 380px, #1a2738 440px, #0d1420 700px, #0b1114 1300px, #0c1d1b 1668px); }
    .desk { display: flex; flex-direction: column; width: 30px; height: 1668px; margin-left: auto; overflow: hidden; }
    .tile { box-sizing: border-box; flex: none; font: 600 24px/32px Inter, sans-serif; color: #dedede; text-shadow: 0 2px 3px rgba(0,0,0,.6); white-space: nowrap; padding-left: 1px; }
    .folder { background: linear-gradient(#8cc3da 0, #8cc3da 5px, #68add0 6px, #7bbfda 85%, #5fa5c3 91%, #70b7d2 94%, #5296b5); }
    .sky { background: linear-gradient(#a6b0bb, #9aa9b7); padding-top: 32px; }
    .sky2 { background: linear-gradient(#a5adb7, #91a2b4); padding-top: 31px; }
    .paper { background: linear-gradient(222deg, #8fa1b4 0 14%, #b2b2b2 15%, #e2e2e2 22%, #cfcfcf 30%, #d9d9d9); }
    .paper.lines { background: repeating-linear-gradient(#cbcbcb 0 5px, #b6b6b6 5px 6px); }
    .dusk { background: linear-gradient(#8491a5, #8c8598); padding-top: 21px; }
    .ember { background: linear-gradient(200deg, #706a80 0, #755265 30%, #1a1b29 50%, #a05c4d 80%, #3b1f2d); padding-top: 33px; }
    .app { background: linear-gradient(90deg, #2e8b9f 0 13px, #277f94 13px 15px, #d4d9db 15px 18px, #182131 18px); }
    .navy { background: linear-gradient(#1c2435, #1d2b40); padding-top: 20px; }
    .night { background: linear-gradient(#060e1c, #0a1423); padding-top: 21px; }
    .forest { background: linear-gradient(#12181a, #1b2326 20%, #0a1818 55%, #0d2420); padding-top: 32px; }
    .foot { position: absolute; left: 0; right: 0; bottom: 0; height: 36px; background: linear-gradient(90deg, #17151f, #0d1113 15%, #0e1a17 40%, #0c1311 65%, #0d1c18); }
    .window { position: absolute; left: 4px; top: 0; width: 2505px; height: 1640px; background: #fff; border-radius: 0 0 10px 10px; overflow: hidden; font-family: Inter, sans-serif; }
    .frame { position: absolute; left: 4px; top: 0; width: 2505px; height: 1640px; border-radius: 0 0 10px 10px; box-shadow: 0 0 10px rgba(0,0,0,.5); }
    .head { box-sizing: border-box; height: 154px; background: #e9ebee; border-bottom: 2px solid #e1e3e5; padding: 7px 0 0 30px; color: #373a3c; }
    .title { margin: 0; font-size: 78px; font-weight: 500; line-height: 80px; letter-spacing: 17.600px; }
    .sub { margin: 0; padding-top: 29px; font-size: 25.500px; line-height: 30px; letter-spacing: 5.920px; }
    place-search { margin-left: 142px; }
    place-map { margin: 52px 0 0 112px; }
  `;
  render() {
    return html`
      <div class="desk">${desk.map(([kind, h, cap]) => html`<div class="tile ${kind}" style="height:${h}px">${cap ? cap.split("|").map((c) => html`<div>${c}</div>`) : ""}</div>`)}</div>
      <div class="foot"></div>
      <div class="frame"></div>
      <div class="window">
        <browser-chrome></browser-chrome>
        <div class="head"><h1 class="title">iFind</h1><p class="sub">A Simple Tool for Looking up Places in the World</p></div>
        <place-search></place-search>
        <place-map></place-map>
      </div>`;
  }
}
